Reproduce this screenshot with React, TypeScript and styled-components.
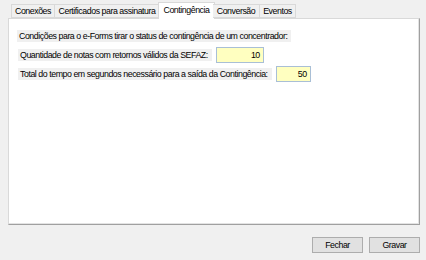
import React from 'react'
import styled, { createGlobalStyle } from 'styled-components'

const GlobalStyle = createGlobalStyle`
  html, body {
    margin: 0;
    padding: 0;
    background: #f0f0f0;
  }
  body {
    font-family: "Liberation Sans", Arial, sans-serif;
    font-size: 8.8px;
    letter-spacing: -0.45px;
    color: #000;
  }
`

const StyledWindow = styled.div`
  width: 426px;
  height: 260px;
  display: flex;
  flex-direction: column;
  background: #f0f0f0;
  box-sizing: border-box;
  padding: 1px 6px 0 8px;
`

const StyledTabStrip = styled.div`
  display: flex;
  align-items: flex-end;
  height: 17px;
  padding-left: 3px;
  position: relative;
  z-index: 1;
`

const StyledTab = styled.div<{ $active?: boolean; $width: number }>`
  box-sizing: border-box;
  width: ${(p) => p.$width}px;
  height: ${(p) => (p.$active ? 17 : 14)}px;
  margin: ${(p) => (p.$active ? '0 -2px -1px -2px' : '0')};
  border: 1px solid #d9d9d9;
  border-bottom: ${(p) => (p.$active ? 'none' : '1px solid #d9d9d9')};
  border-left: ${(p) => (p.$active ? '1px solid #d9d9d9' : 'none')};
  background: ${(p) => (p.$active ? '#ffffff' : '#f0f0f0')};
  display: flex;
  align-items: ${(p) => (p.$active ? 'flex-start' : 'center')};
  justify-content: center;
  padding-top: ${(p) => (p.$active ? '2px' : '0')};
  white-space: nowrap;
  overflow: hidden;
  color: #000;

  &:first-child {
    border-left: 1px solid #d9d9d9;
  }
`

const StyledPanel = styled.div`
  box-sizing: border-box;
  width: 412px;
  height: 207px;
  background: #fff;
  border: 1px solid #d9d9d9;
  border-right: 1px solid #a0a0a0;
  border-bottom: 1px solid #a0a0a0;
  box-shadow: inset -1px -1px 0 #e3e3e3;
  padding: 11px 0 0 8px;
  display: flex;
  flex-direction: column;
  align-items: flex-start;
`

const StyledLabel = styled.span`
  background: #f0f0f0;
  line-height: 12px;
  height: 12px;
  padding: 0 4px 0 2px;
  white-space: nowrap;
`

const StyledRow = styled.div<{ $gap: number; $top: number }>`
  display: flex;
  align-items: center;
  gap: ${(p) => p.$gap}px;
  margin: ${(p) => p.$top}px 0 0 1px;
`

const StyledInput = styled.div<{ $width: number }>`
  box-sizing: border-box;
  width: ${(p) => p.$width}px;
  height: 16px;
  background: #ffffc0;
  border: 1px solid #a9bfd6;
  text-align: right;
  padding: 0 3px;
  line-height: 14px;
`

const StyledFooter = styled.div`
  display: flex;
  justify-content: flex-end;
  gap: 6px;
  padding: 12px 0 0 0;
`

const StyledButton = styled.button`
  box-sizing: border-box;
  width: 51px;
  height: 16px;
  padding: 0;
  margin: 0;
  background: #e1e1e1;
  border: 1px solid #adadad;
  font-family: "Liberation Sans", Arial, sans-serif;
  font-size: 8.8px;
  letter-spacing: -0.45px;
  color: #000;
  line-height: 14px;
`

const tabs = [
  { label: 'Conexões', width: 44 },
  { label: 'Certificados para assinatura', width: 105 },
  { label: 'Contingência', width: 57, active: true },
  { label: 'Conversão', width: 47 },
  { label: 'Eventos', width: 36 }
]

export default function App() {
  return (
    <>
      <GlobalStyle />
      <StyledWindow>
        <StyledTabStrip>
          {tabs.map((t) => (
            <StyledTab key={t.label} $active={t.active} $width={t.width}>
              {t.label}
            </StyledTab>
          ))}
        </StyledTabStrip>
        <StyledPanel>
          <StyledLabel>Condições para o e-Forms tirar o status de contingência de um concentrador:</StyledLabel>
          <StyledRow $gap={4} $top={5}>
            <StyledLabel>Quantidade de notas com retornos válidos da SEFAZ:</StyledLabel>
            <StyledInput $width={48}>10</StyledInput>
          </StyledRow>
          <StyledRow $gap={4} $top={3}>
            <StyledLabel>Total do tempo em segundos necessário para a saída da Contingência:</StyledLabel>
            <StyledInput $width={35}>50</StyledInput>
          </StyledRow>
        </StyledPanel>
        <StyledFooter>
          <StyledButton>Fechar</StyledButton>
          <StyledButton>Gravar</StyledButton>
        </StyledFooter>
      </StyledWindow>
    </>
  )
}
